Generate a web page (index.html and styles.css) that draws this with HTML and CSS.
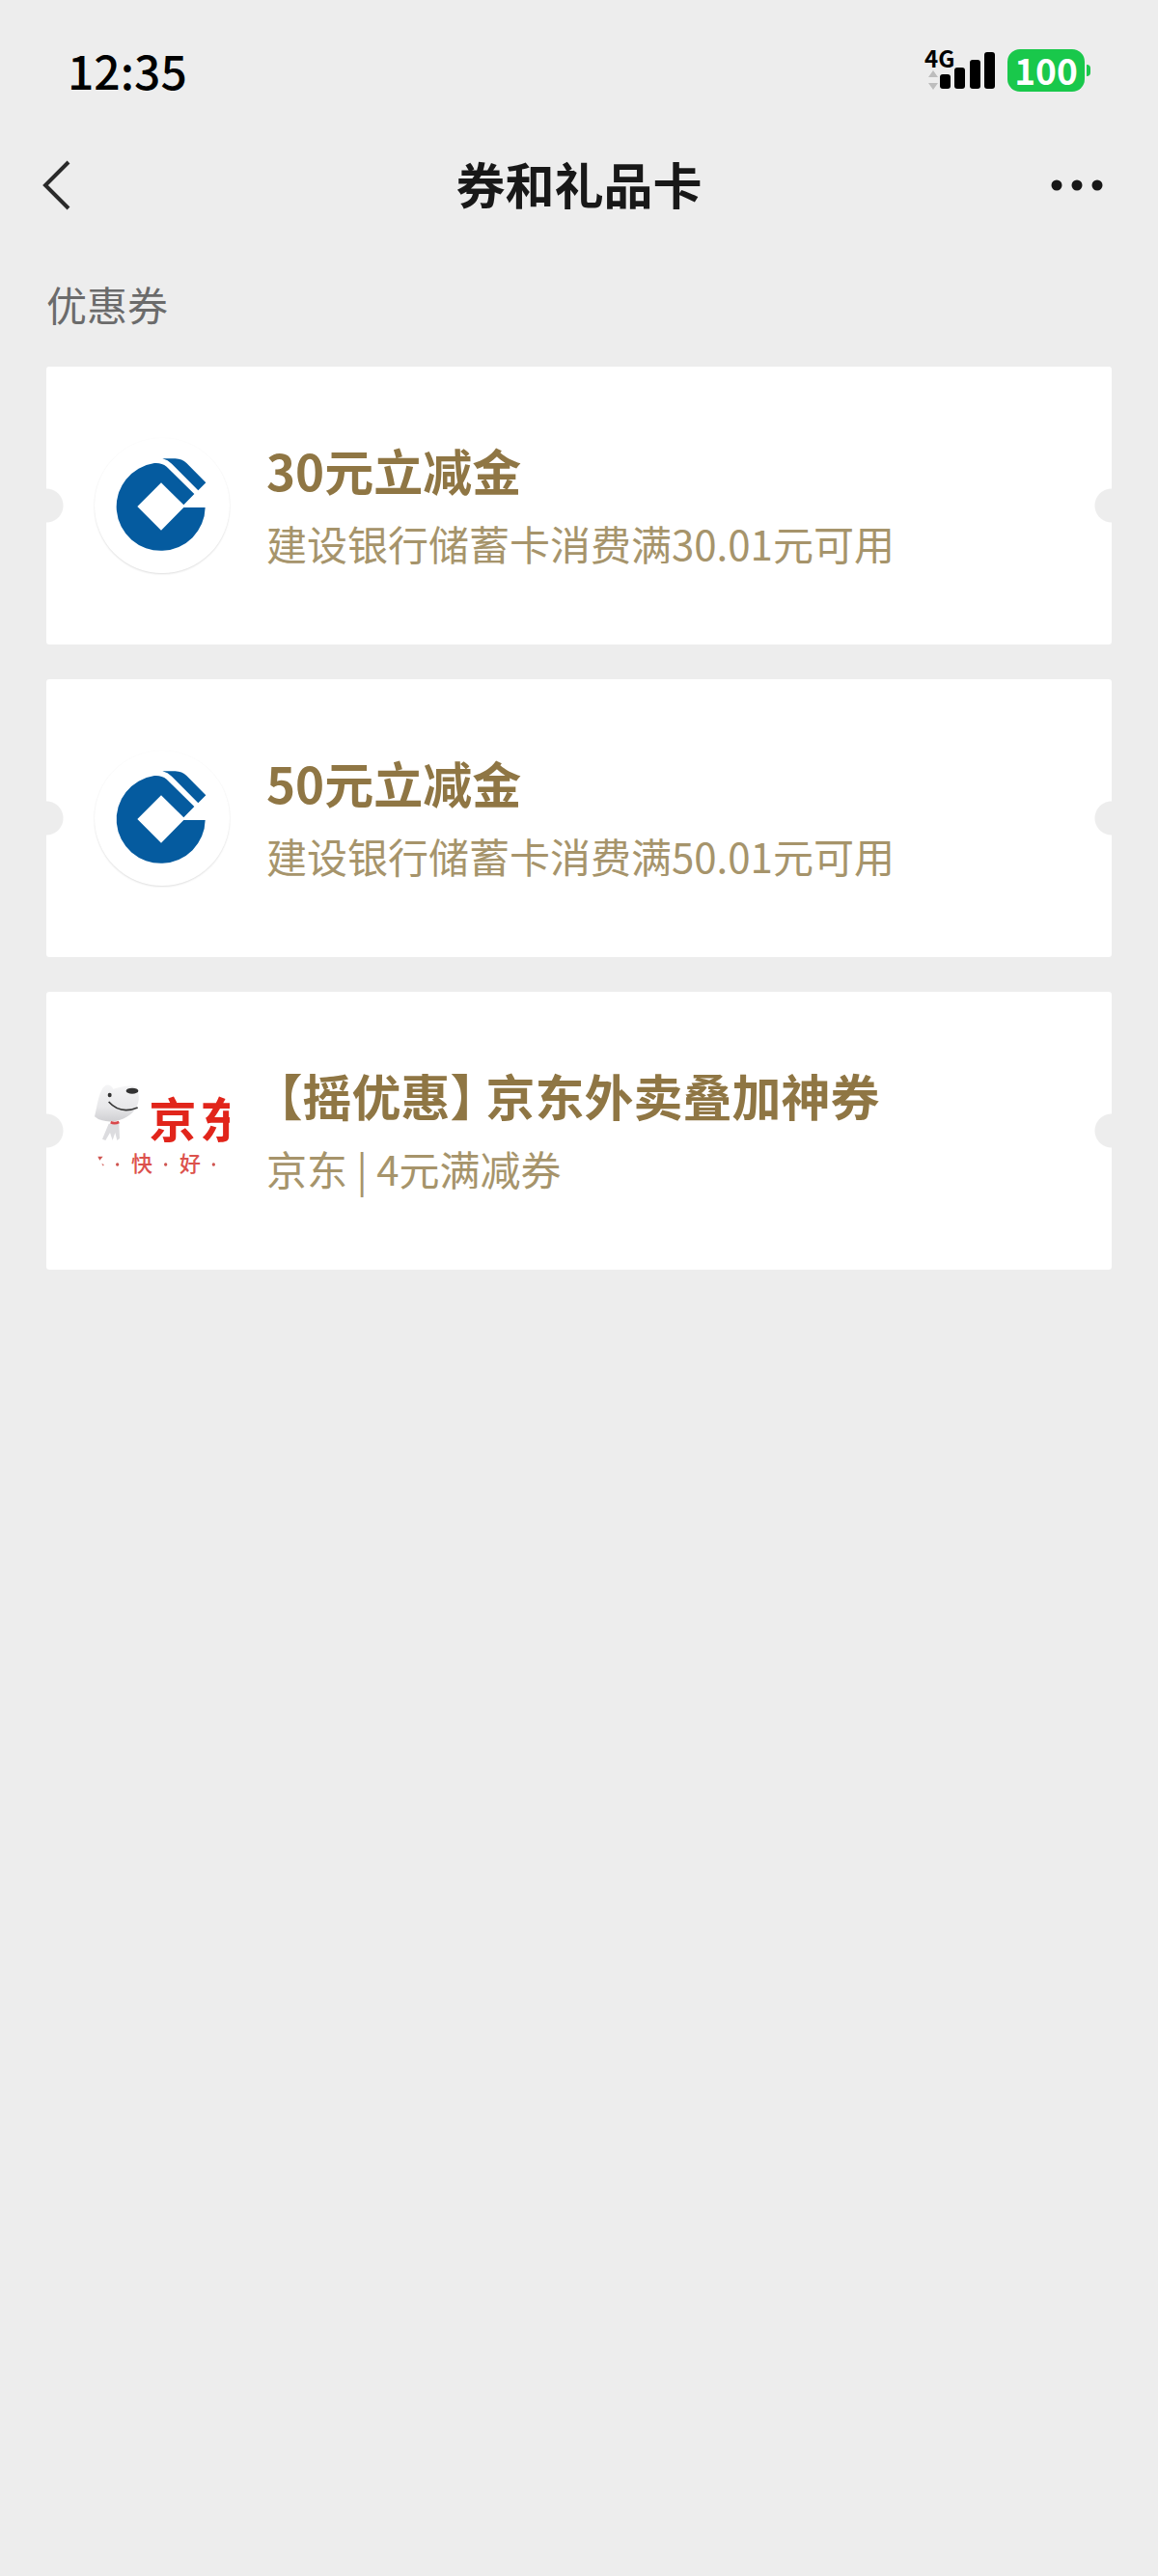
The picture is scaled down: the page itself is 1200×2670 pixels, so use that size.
FILE: index.html
```html
<!DOCTYPE html>
<html lang="zh-CN">
<head>
<meta charset="utf-8">
<meta name="viewport" content="width=device-width, initial-scale=1">
<title>券和礼品卡</title>
<link rel="stylesheet" href="styles.css">
</head>
<body>
<svg class="sprite" aria-hidden="true">
  <symbol id="ccb" viewBox="54 12 420 420">
    <path fill="#055b9f" d="M398 228A138 137 0 1 1 240 90Q262 88 278 101L364 186L331 220L261 151L187 225L261 299L331 228Z"/>
    <path fill="#055b9f" d="M265 76H305Q326 77 340 90L400 151L376 175L294 92Q282 80 265 76Z"/>
  </symbol>
</svg>
<div class="status-bar">
  <time class="clock">12:35</time>
  <div class="status-icons">
    <svg class="signal" viewBox="0 0 74 44" role="img" aria-label="4G">
      <text class="network" x="0" y="19">4G</text>
      <path fill="#bdbdbd" d="M9 22l5 7H4zM9 42l5-7H4z"/>
      <rect x="16" y="26" width="11" height="15" rx="3"/>
      <rect x="31" y="19" width="11" height="22" rx="3"/>
      <rect x="47" y="11" width="11" height="30" rx="3"/>
      <rect x="62" y="3" width="11" height="38" rx="3"/>
    </svg>
    <div class="battery"><span class="battery-level">100</span><span class="battery-cap"></span></div>
  </div>
</div>
<header class="nav">
  <button class="nav-button" type="button" aria-label="返回">
    <svg width="32" height="54" viewBox="0 0 32 54"><path d="M29 3L5 27L29 51" fill="none" stroke="#2a2a2a" stroke-width="4"/></svg>
  </button>
  <h1 class="nav-title">券和礼品卡</h1>
  <button class="nav-button nav-button-end" type="button" aria-label="更多">
    <svg width="56" height="14" viewBox="0 0 56 14" fill="#181818"><circle cx="7" cy="7" r="5.5"/><circle cx="28" cy="7" r="5.5"/><circle cx="49" cy="7" r="5.5"/></svg>
  </button>
</header>
<main class="content">
  <h2 class="section-title">优惠券</h2>
  <ul class="coupons">
    <li><a class="coupon" href="#">
      <span class="logo logo-round"><svg viewBox="0 0 140 140"><use href="#ccb"/></svg></span>
      <span class="coupon-text"><strong class="coupon-name">30元立减金</strong><span class="coupon-note">建设银行储蓄卡消费满30.01元可用</span></span>
    </a></li>
    <li><a class="coupon" href="#">
      <span class="logo logo-round"><svg viewBox="0 0 140 140"><use href="#ccb"/></svg></span>
      <span class="coupon-text"><strong class="coupon-name">50元立减金</strong><span class="coupon-note">建设银行储蓄卡消费满50.01元可用</span></span>
    </a></li>
    <li><a class="coupon" href="#">
      <span class="logo">
        <svg viewBox="54 6 420 420">
          <defs>
            <linearGradient id="fur" x1="0" y1="0" x2="0" y2="1"><stop offset="0" stop-color="#f5f5f6"/><stop offset=".6" stop-color="#e8e8ea"/><stop offset="1" stop-color="#cfcfd2"/></linearGradient>
          </defs>
          <path fill="url(#fur)" d="M54 172C60 150 64 112 76 90C84 70 102 68 112 86C136 80 164 72 182 80C198 106 192 134 178 152C156 182 108 194 78 184Q62 180 54 172Z"/>
          <path fill="#dcdcdf" d="M98 194H130L132 240L124 246L118 222L110 246L102 222L88 246L78 242Z"/>
          <path d="M98 126Q134 166 188 144" fill="none" stroke="#333" stroke-width="5"/>
          <ellipse cx="101" cy="105" rx="6" ry="7" fill="#333"/>
          <ellipse cx="171" cy="92" rx="19" ry="9" fill="#333"/>
          <path d="M104 190Q117 195 130 189" fill="none" stroke="#d9494c" stroke-width="8"/>
          <text class="brand" x="223 381" y="237">京东</text>
          <text class="slogan" x="168 318" y="342">快好</text>
          <g fill="#cf5450"><path d="M64 296H80L70 308ZM76 318l7 3l-2 5z"/><circle cx="125" cy="321" r="5"/><circle cx="275" cy="321" r="5"/><circle cx="424" cy="321" r="5"/></g>
        </svg>
      </span>
      <span class="coupon-text"><strong class="coupon-name coupon-name-tagged">【摇优惠】 京东外卖叠加神券</strong><span class="coupon-note">京东 | 4元满减券</span></span>
    </a></li>
  </ul>
</main>
</body>
</html>
```
FILE: styles.css
```css
* { box-sizing: border-box; }

body {
  margin: 0;
  min-height: 100vh;
  background: #ededed;
  color: #181818;
  font-family: "Noto Sans CJK SC", sans-serif;
}

.sprite { position: absolute; width: 0; height: 0; }

.status-bar {
  display: flex;
  align-items: center;
  justify-content: space-between;
  height: 146px;
  padding: 0 70px;
  color: #000;
}

.clock { padding-bottom: 2px; font-size: 48px; font-weight: 500; line-height: 60px; }

.status-icons { display: flex; align-items: center; gap: 12px; }

.signal { width: 74px; height: 44px; overflow: visible; }

.network { font-size: 24px; font-weight: 700; }

.battery { display: flex; align-items: center; gap: 2px; }

.battery-level {
  width: 80px;
  height: 44px;
  border-radius: 13px;
  background: #19c84b;
  color: #fff;
  font-size: 37px;
  font-weight: 700;
  line-height: 42px;
  text-align: center;
}

.battery-cap {
  width: 4px;
  height: 12px;
  border-radius: 0 6px 6px 0;
  background: #19c84b;
}

.nav {
  display: grid;
  grid-template-columns: 1fr auto 1fr;
  align-items: center;
  height: 92px;
  padding: 0 42px;
}

.nav-button {
  display: flex;
  justify-self: start;
  padding: 0;
  border: 0;
  background: none;
}

.nav-button-end { justify-self: end; padding-right: 14px; }

.nav-title {
  margin: 0;
  padding-bottom: 4px;
  font-size: 51px;
  font-weight: 700;
  line-height: 60px;
}

.content { padding: 48px; }

.section-title {
  margin: 0 0 36px;
  color: #6b6b6b;
  font-size: 42px;
  font-weight: 400;
  line-height: 58px;
}

.coupons {
  display: grid;
  gap: 36px;
  margin: 0;
  padding: 0;
  list-style: none;
}

.coupon {
  display: flex;
  align-items: center;
  gap: 38px;
  min-height: 288px;
  padding: 0 50px;
  border-radius: 3px;
  background:
    radial-gradient(circle at 0 50%, #ededed 17px, transparent 18px),
    radial-gradient(circle at 100% 50%, #ededed 17px, #fff 18px);
  text-decoration: none;
}

.logo { flex: none; width: 140px; height: 140px; }

.logo svg { display: block; width: 100%; height: 100%; overflow: hidden; }

.logo-round { border-radius: 50%; box-shadow: 0 1px 2px #0002; }

.brand { fill: #e1251b; font-size: 148px; font-weight: 700; }

.slogan { fill: #dc514c; font-size: 66px; font-weight: 500; }

.coupon-text { display: flex; flex-direction: column; gap: 14px; }

.coupon-name {
  color: #8f7644;
  font-size: 51px;
  font-weight: 700;
  line-height: 64px;
}

/* Half-width brackets keep the tag close to the name. */
.coupon-name-tagged { font-feature-settings: "halt"; text-indent: 12px; }

.coupon-note { color: #a6946b; font-size: 42px; line-height: 60px; }
```
